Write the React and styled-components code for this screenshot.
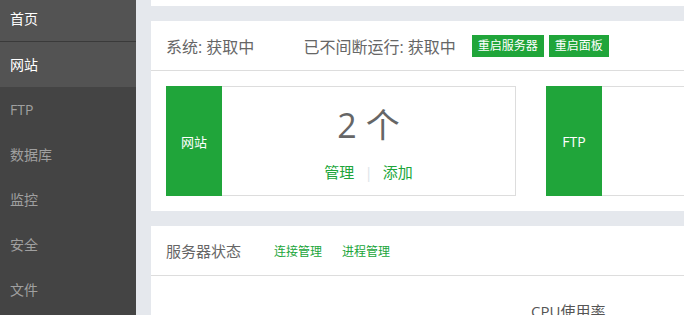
import React from 'react';
import styled, { createGlobalStyle } from 'styled-components';

const GlobalStyle = createGlobalStyle`
  html, body {
    margin: 0;
    padding: 0;
    overflow: hidden;
    background: #e5e8ed;
    font-family: "Open Sans", "Noto Sans CJK SC", sans-serif;
  }
`;

const Layout = styled.div`
  display: flex;
  width: 684px;
  height: 315px;
  overflow: hidden;
`;

const Sidebar = styled.div`
  width: 136px;
  flex-shrink: 0;
  background: #444444;
  display: flex;
  flex-direction: column;
`;

const NavItem = styled.div`
  height: ${({ short }) => (short ? '41px' : '45px')};
  line-height: ${({ short }) => (short ? '37px' : '45px')};
  padding-left: 10px;
  font-size: 14px;
  color: ${({ light }) => (light ? '#ffffff' : '#a0a0a0')};
  background: ${({ light }) => (light ? '#535353' : 'transparent')};
  border-bottom: ${({ short }) => (short ? '1px solid #3a3a3a' : 'none')};
`;

const Main = styled.div`
  flex: 1;
  padding-left: 15px;
  display: flex;
  flex-direction: column;
  gap: 15px;
  min-width: 0;
`;

const PrevPanel = styled.div`
  height: 6px;
  background: #fff;
  flex-shrink: 0;
`;

const Panel = styled.div`
  background: #fff;
  flex-shrink: 0;
  overflow: hidden;
`;

const PanelHead = styled.div`
  height: 49px;
  border-bottom: 1px solid #dddddd;
  display: flex;
  align-items: center;
  padding-left: 15px;
  white-space: nowrap;
`;

const HeadText = styled.span`
  font-size: ${({ size }) => size || 16}px;
  color: #666;
  margin-right: ${({ gap }) => gap || 0}px;
`;

const SmallButton = styled.span`
  background: #20a53a;
  color: #fff;
  font-size: 12px;
  height: 22px;
  line-height: 22px;
  padding: 0 6px;
  margin-right: 5px;
`;

const HeadLink = styled.span`
  font-size: 12px;
  color: #20a53a;
  margin-right: 20px;
`;

const CardRow = styled.div`
  display: flex;
  gap: 30px;
  padding: 15px;
`;

const Card = styled.div`
  width: 350px;
  height: 110px;
  flex-shrink: 0;
  border: 1px solid #dddddd;
  border-left: none;
  display: flex;
  box-sizing: border-box;
`;

const CardLabel = styled.div`
  width: 56px;
  margin-top: -1px;
  margin-bottom: -1px;
  background: #20a53a;
  color: #fff;
  font-size: 13px;
  display: flex;
  align-items: center;
  justify-content: center;

  &.latin {
    font-size: 14px;
  }
`;

const CardBody = styled.div`
  flex: 1;
  display: flex;
  flex-direction: column;
  align-items: center;
`;

const Count = styled.div`
  font-size: 34px;
  color: #666;
  margin-top: 16px;
  line-height: 44px;
`;

const CardLinks = styled.div`
  margin-top: 14px;
  display: flex;
  align-items: center;
  gap: 10px;
  font-size: 15px;
  color: #20a53a;
`;

const Divider = styled.span`
  color: #dde3e8;
`;

const StatusArea = styled.div`
  padding: 24px 0 0 380px;
  height: 60px;
`;

const StatusTitle = styled.div`
  font-size: 15px;
  color: #555;
`;

const navItems = ['FTP', '数据库', '监控', '安全', '文件'];

const App = () => (
  <>
    <GlobalStyle />
    <Layout>
      <Sidebar>
        <NavItem light short>首页</NavItem>
        <NavItem light>网站</NavItem>
        {navItems.map((n) => (
          <NavItem key={n}>{n}</NavItem>
        ))}
      </Sidebar>
      <Main>
        <PrevPanel />
        <Panel>
          <PanelHead>
            <HeadText gap={49}>系统: 获取中</HeadText>
            <HeadText gap={16}>已不间断运行: 获取中</HeadText>
            <SmallButton>重启服务器</SmallButton>
            <SmallButton>重启面板</SmallButton>
          </PanelHead>
          <CardRow>
            <Card>
              <CardLabel>网站</CardLabel>
              <CardBody>
                <Count>2 个</Count>
                <CardLinks>
                  <span>管理</span>
                  <Divider>|</Divider>
                  <span>添加</span>
                </CardLinks>
              </CardBody>
            </Card>
            <Card>
              <CardLabel className="latin">FTP</CardLabel>
              <CardBody />
            </Card>
          </CardRow>
        </Panel>
        <Panel>
          <PanelHead>
            <HeadText size={15} gap={33}>服务器状态</HeadText>
            <HeadLink>连接管理</HeadLink>
            <HeadLink>进程管理</HeadLink>
          </PanelHead>
          <StatusArea>
            <StatusTitle>CPU使用率</StatusTitle>
          </StatusArea>
        </Panel>
      </Main>
    </Layout>
  </>
);

export default App;
